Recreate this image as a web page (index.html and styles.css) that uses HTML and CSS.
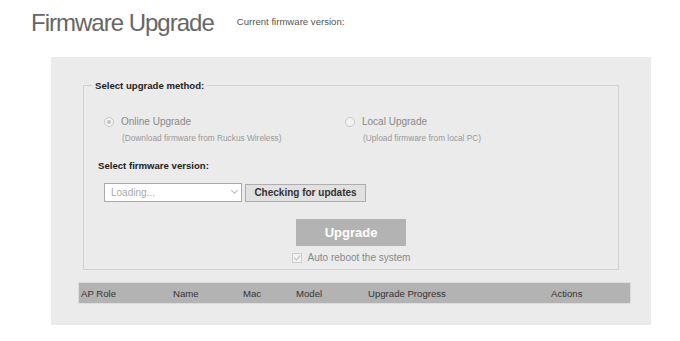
FILE: index.html
```html
<!DOCTYPE html>
<html lang="en">
<head>
  <meta charset="UTF-8">
  <title>Firmware Upgrade</title>
  <link rel="stylesheet" href="styles.css">
</head>
<body>
  <div class="header">
    <h1 class="title">Firmware Upgrade</h1>
    <span class="current">Current firmware version:</span>
  </div>

  <div class="panel">
    <fieldset class="method">
      <legend>Select upgrade method:</legend>

      <div class="options">
        <div class="option">
          <label class="option-label"><span class="radio checked"></span>Online Upgrade</label>
          <div class="option-note">(Download firmware from Ruckus Wireless)</div>
        </div>
        <div class="option">
          <label class="option-label"><span class="radio"></span>Local Upgrade</label>
          <div class="option-note">(Upload firmware from local PC)</div>
        </div>
      </div>

      <div class="version-title">Select firmware version:</div>
      <div class="version-row">
        <div class="select">Loading...<span class="arrow"></span></div>
        <button class="check-btn">Checking for updates</button>
      </div>

      <div class="actions">
        <button class="upgrade-btn">Upgrade</button>
        <label class="reboot"><span class="checkbox"></span>Auto reboot the system</label>
      </div>
    </fieldset>

    <table class="ap-table">
      <tr>
        <th class="col-role">AP Role</th>
        <th class="col-name">Name</th>
        <th class="col-mac">Mac</th>
        <th class="col-model">Model</th>
        <th class="col-progress">Upgrade Progress</th>
        <th>Actions</th>
      </tr>
    </table>
  </div>
</body>
</html>
```

FILE: styles.css
```css
body {
  margin: 0;
  font-family: "Liberation Sans", Arial, sans-serif;
  background: #fff;
}

.header {
  display: flex;
  align-items: flex-start;
  padding: 9px 0 0 31px;
  height: 48px;
}

.title {
  margin: 0;
  font-size: 24px;
  letter-spacing: -1px;
  font-weight: normal;
  color: #666;
}

.current {
  margin: 7px 0 0 23px;
  font-size: 9.6px;
  color: #555;
}

.panel {
  margin-left: 51px;
  width: 600px;
  height: 268px;
  box-sizing: border-box;
  background-color: #ebebeb;
  padding-top: 23px;
}

.method {
  margin: 0 32px 0 32px;
  border: 1px solid #d2d2d2;
  padding: 25px 0 6px 20px;
  height: 190px;
  box-sizing: border-box;
}

.method legend {
  font-size: 9.6px;
  font-weight: bold;
  color: #222;
  padding: 0 3px;
  margin-left: -12px;
}

.options {
  display: flex;
}

.option {
  width: 241px;
}

.option-label {
  display: flex;
  align-items: center;
  font-size: 10px;
  color: #888;
}

.radio {
  width: 8px;
  height: 8px;
  border: 1px solid #c8c8c8;
  border-radius: 50%;
  margin-right: 7px;
  position: relative;
  background: #f2f2f2;
}

.radio.checked::after {
  content: "";
  position: absolute;
  left: 2px;
  top: 2px;
  width: 4px;
  height: 4px;
  border-radius: 50%;
  background: #c4c4c4;
}

.option-note {
  margin: 6px 0 0 18px;
  font-size: 8.3px;
  color: #999;
}

.version-title {
  margin: 17px 0 0 -6px;
  font-size: 9.6px;
  font-weight: bold;
  color: #222;
}

.version-row {
  display: flex;
  align-items: center;
  margin-top: 12px;
}

.select {
  position: relative;
  width: 130px;
  height: 17px;
  border: 1px solid #aaa;
  background: #fff;
  font-size: 10px;
  color: #aaa;
  line-height: 17px;
  padding-left: 6px;
}

.arrow {
  position: absolute;
  right: 4px;
  top: 4px;
  width: 4px;
  height: 4px;
  border-right: 1px solid #bbb;
  border-bottom: 1px solid #bbb;
  transform: rotate(45deg);
}

.check-btn {
  margin-left: 3px;
  width: 121px;
  height: 18px;
  padding: 0;
  border: 1px solid #adadad;
  background-color: #e1e1e1;
  font-family: inherit;
  font-size: 10px;
  font-weight: bold;
  color: #333;
}

.actions {
  display: flex;
  flex-direction: column;
  align-items: center;
  margin: 17px 0 0 -20px;
}

.upgrade-btn {
  width: 110px;
  height: 27px;
  border: none;
  background-color: #b3b3b3;
  color: #fff;
  font-family: inherit;
  font-size: 13px;
  font-weight: bold;
}

.reboot {
  display: flex;
  align-items: center;
  margin-top: 6px;
  font-size: 10px;
  color: #888;
}

.checkbox {
  width: 8px;
  height: 8px;
  border: 1px solid #ccc;
  background: #f2f2f2;
  margin-right: 6px;
  position: relative;
}

.checkbox::after {
  content: "";
  position: absolute;
  left: 2px;
  top: 0;
  width: 3px;
  height: 5px;
  border-right: 1px solid #bbb;
  border-bottom: 1px solid #bbb;
  transform: rotate(40deg);
}

.ap-table {
  margin: 12px 0 0 27px;
  width: 553px;
  border-collapse: collapse;
  background-color: #b3b3b3;
  border: 1px solid #dcdcdc;
}

.ap-table th {
  height: 20px;
  padding: 0 0 0 2px;
  text-align: left;
  font-size: 9.6px;
  font-weight: normal;
  color: #333;
}

.col-role { width: 90px; }
.col-name { width: 68px; }
.col-mac { width: 51px; }
.col-model { width: 70px; }
.col-progress { width: 181px; }
```
